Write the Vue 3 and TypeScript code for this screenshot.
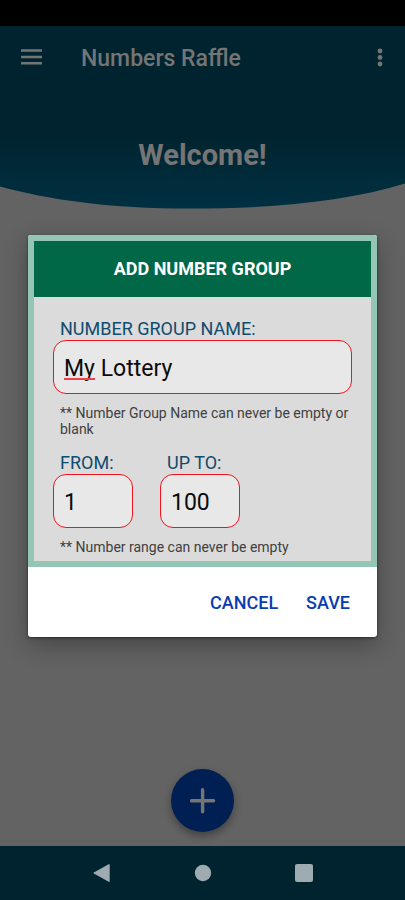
<script setup lang="ts">
import { ref } from 'vue'

const groupName = ref('My Lottery')
const from = ref('1')
const upTo = ref('100')
const open = ref(true)

function close(): void {
  open.value = false
}
</script>

<template>
  <div class="screen">
    <div class="status-bar"></div>

    <div class="app">
      <header class="hero">
        <div class="toolbar">
          <button class="icon-button" type="button" aria-label="Open menu">
            <svg width="21" height="18" viewBox="0 0 21 18">
              <path d="M0 1.6h21M0 8h21M0 14.2h21" stroke="currentColor" stroke-width="2.5" />
            </svg>
          </button>
          <h1 class="title">Numbers Raffle</h1>
          <button class="icon-button" type="button" aria-label="More options">
            <svg width="6" height="20" viewBox="0 0 6 20">
              <circle cx="3" cy="3" r="2.4" fill="currentColor" />
              <circle cx="3" cy="9.5" r="2.4" fill="currentColor" />
              <circle cx="3" cy="16" r="2.4" fill="currentColor" />
            </svg>
          </button>
        </div>
        <p class="welcome">Welcome!</p>
        <svg class="curve" viewBox="0 0 405 26" preserveAspectRatio="none" aria-hidden="true">
          <path d="M0 3.5C50 17 110 25.6 190 25.6C270 25.6 345 19 405 0.5V26H0Z" fill="#636363" />
        </svg>
      </header>

      <main class="content">
        <button class="fab" type="button" aria-label="Add number group">
          <svg width="26" height="26" viewBox="0 0 26 26">
            <path d="M12.6 1.8v22M1.6 12.8h22" stroke="currentColor" stroke-width="3.4" stroke-linecap="round" />
          </svg>
        </button>
      </main>

      <div v-if="open" class="overlay">
        <form class="dialog" role="dialog" aria-labelledby="dialog-title" @submit.prevent="close">
          <div class="panel">
            <h2 id="dialog-title" class="dialog-title">ADD NUMBER GROUP</h2>
            <div class="fields">
              <div class="field">
                <label for="group-name">NUMBER GROUP NAME:</label>
                <div class="input-wrap">
                  <input id="group-name" v-model="groupName" type="text" spellcheck="false" />
                  <span v-if="groupName.startsWith('My ')" class="spelling"></span>
                </div>
              </div>
              <p class="hint">** Number Group Name can never be empty or blank</p>
              <div class="range">
                <div class="field">
                  <label for="from">FROM:</label>
                  <input id="from" v-model="from" type="text" inputmode="numeric" />
                </div>
                <div class="field">
                  <label for="up-to">UP TO:</label>
                  <input id="up-to" v-model="upTo" type="text" inputmode="numeric" />
                </div>
              </div>
              <p class="hint">** Number range can never be empty</p>
            </div>
          </div>
          <div class="actions">
            <button type="button" @click="close">CANCEL</button>
            <button type="submit">SAVE</button>
          </div>
        </form>
      </div>
    </div>

    <nav class="system-nav" aria-label="System">
      <button type="button" aria-label="Back">
        <svg width="18" height="20" viewBox="0 0 18 20">
          <path d="M16 1.8v16.4L1.2 10Z" fill="currentColor" stroke="currentColor" stroke-width="1.4" stroke-linejoin="round" />
        </svg>
      </button>
      <button type="button" aria-label="Home">
        <svg width="18" height="18" viewBox="0 0 18 18">
          <circle cx="9" cy="9" r="8.2" fill="currentColor" />
        </svg>
      </button>
      <button type="button" aria-label="Recent apps">
        <svg width="18" height="18" viewBox="0 0 18 18">
          <rect width="18" height="18" rx="2" fill="currentColor" />
        </svg>
      </button>
    </nav>
  </div>
</template>

<style>
body {
  background: #636363;
}
</style>

<style scoped>
* {
  box-sizing: border-box;
}

.screen {
  display: flex;
  flex-direction: column;
  min-height: 100vh;
  background: #636363;
  font-family: Roboto, sans-serif;
}

button {
  border: 0;
  padding: 0;
  background: none;
  color: inherit;
  font-family: inherit;
  cursor: pointer;
}

svg {
  display: block;
}

h1,
h2,
p {
  margin: 0;
}

.status-bar {
  height: 26px;
  background: #000;
}

.app {
  position: relative;
  flex: 1;
  display: flex;
  flex-direction: column;
}

.hero {
  display: flex;
  flex-direction: column;
  background: linear-gradient(#00242f 0%, #00242f 60%, #003042 100%);
  color: #757575;
}

.toolbar {
  display: flex;
  align-items: center;
  height: 64px;
  padding: 0 22px 0 21px;
}

.title {
  flex: 1;
  padding: 2px 0 0 39px;
  font-size: 23px;
  line-height: 32px;
  font-weight: 500;
}

.welcome {
  padding: 46px 0 9px;
  text-align: center;
  font-size: 29px;
  line-height: 38px;
  font-weight: 700;
}

.curve {
  width: 100%;
  height: 26px;
}

.content {
  flex: 1;
  display: flex;
  justify-content: center;
  align-items: flex-end;
  padding-bottom: 14px;
}

.fab {
  display: flex;
  justify-content: center;
  align-items: center;
  width: 63px;
  height: 63px;
  border-radius: 50%;
  background: #001f52;
  color: #757575;
  box-shadow: 0 4px 8px rgba(0, 0, 0, 0.35);
}

.overlay {
  position: absolute;
  inset: 0;
  display: flex;
  justify-content: center;
  align-items: center;
  padding: 0 28px;
}

.dialog {
  width: 100%;
  max-width: 480px;
  border-radius: 3px;
  overflow: hidden;
  background: #fff;
  box-shadow: 0 8px 24px rgba(0, 0, 0, 0.3), 0 1px 3px rgba(0, 0, 0, 0.5);
}

.panel {
  border: 6px solid #94c5b5;
  background: #dbdbdb;
}

.dialog-title {
  background: #006747;
  color: #fff;
  text-align: center;
  font-size: 18px;
  line-height: 56px;
  font-weight: 700;
}

.fields {
  padding: 20px 19px 6px;
}

.field label {
  display: block;
  padding-left: 7px;
  color: #0f4c6e;
  font-size: 18px;
  line-height: 23px;
}

.input-wrap {
  position: relative;
}

input {
  display: block;
  width: 100%;
  height: 54px;
  padding: 2px 10px 0;
  border: 1px solid #f0141e;
  border-radius: 13px;
  outline: 0;
  background: #e8e8e8;
  color: #0b0b0b;
  font-family: inherit;
  font-size: 23px;
}

.spelling {
  position: absolute;
  left: 11px;
  top: 38px;
  width: 31px;
  height: 2px;
  background: #f0404a;
}

.hint {
  padding: 11px 0 0 7px;
  color: #404040;
  font-size: 14px;
  line-height: 16px;
}

.range {
  display: flex;
  gap: 27px;
  margin-top: 14px;
}

.range .field {
  width: 80px;
}

.actions {
  display: flex;
  justify-content: flex-end;
  align-items: center;
  gap: 28px;
  height: 70px;
  padding: 2px 27px 0 0;
  color: #0a3cb0;
}

.actions button {
  font-size: 18px;
  line-height: 36px;
  font-weight: 500;
}

.system-nav {
  display: flex;
  justify-content: center;
  align-items: center;
  gap: 83px;
  height: 54px;
  background: #00242f;
  color: #9eabb0;
}
</style>
